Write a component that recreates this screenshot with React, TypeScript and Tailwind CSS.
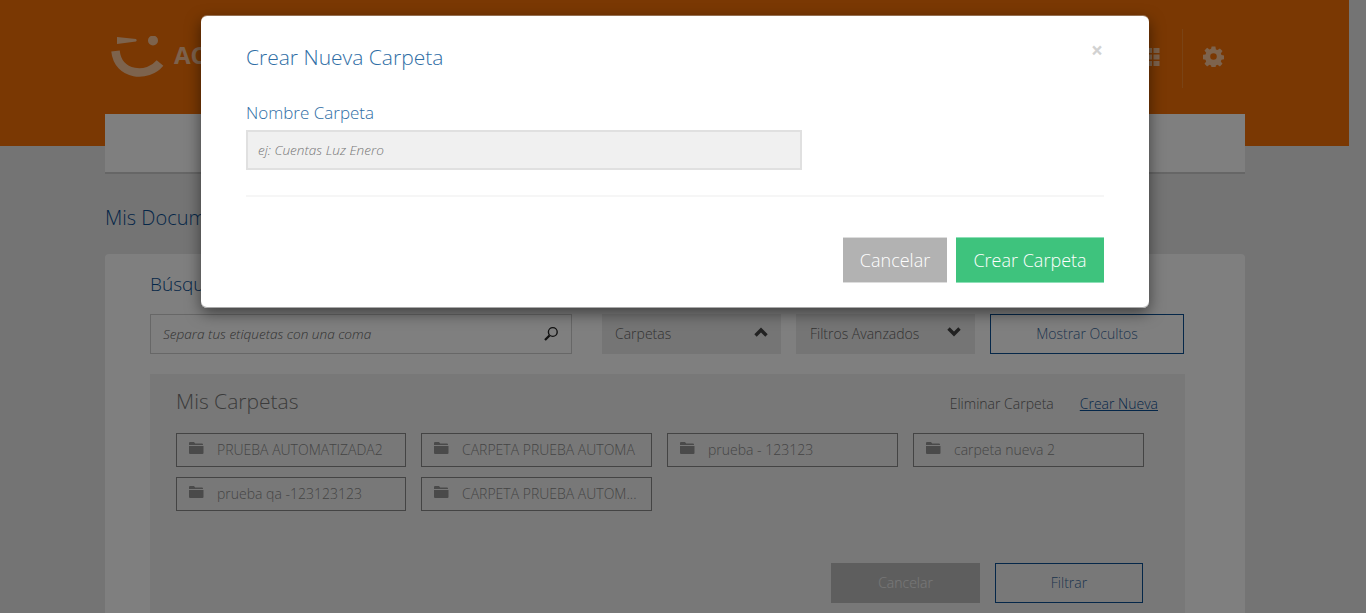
const folders = [
  "PRUEBA AUTOMATIZADA2",
  "CARPETA PRUEBA AUTOMA",
  "prueba - 123123",
  "carpeta nueva 2",
  "prueba qa -123123123",
  "CARPETA PRUEBA AUTOM...",
];

function Logo() {
  return (
    <svg width="54" height="42" viewBox="0 0 54 42" className="shrink-0">
      <path d="M7 1 L26 3 Q27.5 4 26 5.5 L7 8Z" fill="#ffffff" fillOpacity="0.6" />
      <circle cx="43" cy="4.5" r="5" fill="#ffffff" fillOpacity="0.6" />
      <path d="M5.5 15 C8 40 38 42 50 27" fill="none" stroke="#ffffff" strokeOpacity="0.6" strokeWidth="8.5" />
    </svg>
  );
}

function GridIcon() {
  return (
    <svg width="14" height="18" viewBox="0 0 14 18" fill="#ffffff" fillOpacity="0.6" className="mb-[4px]">
      {[0, 6.5, 13].map((y) =>
        [0, 7.5].map((x) => <rect key={`${x}-${y}`} x={x} y={y} width="6" height="5" />)
      )}
    </svg>
  );
}

function GearIcon() {
  return (
    <svg width="21" height="21" viewBox="0 0 21 21" fill="#ffffff" fillOpacity="0.6" className="mb-[4px]">
      <path
        fillRule="evenodd"
        d="M8.6 0.5h3.8l.5 2.9 1.6.7 2.4-1.7 2.6 2.6-1.7 2.4.7 1.6 2.9.5v3.8l-2.9.5-.7 1.6 1.7 2.4-2.6 2.6-2.4-1.7-1.6.7-.5 2.9H8.6l-.5-2.9-1.6-.7-2.4 1.7-2.6-2.6 1.7-2.4-.7-1.6-2.9-.5V8.9l2.9-.5.7-1.6L1.5 4.4l2.6-2.6 2.4 1.7 1.6-.7zM10.5 7.2a3.3 3.3 0 1 0 0 6.6 3.3 3.3 0 0 0 0-6.6z"
      />
    </svg>
  );
}

function FolderIcon() {
  return (
    <svg width="15" height="12" viewBox="0 0 15 12" fill="#949494" className="mr-[13px] mb-[3px] shrink-0">
      <path d="M1 0h4l1.2 1.5H13a1 1 0 0 1 1 1V3H0V1a1 1 0 0 1 1-1z" />
      <path d="M0 4h14.5v7a1 1 0 0 1-1 1H1a1 1 0 0 1-1-1z" />
    </svg>
  );
}

function SearchIcon() {
  return (
    <svg width="16" height="16" viewBox="0 0 16 16" fill="none" stroke="#222222" strokeWidth="1.4">
      <circle cx="9.8" cy="6" r="4.4" />
      <path d="M6.5 9.4 L2 14" strokeWidth="2.2" />
    </svg>
  );
}

function Chevron({ up }: { up?: boolean }) {
  return (
    <svg width="14" height="10" viewBox="0 0 14 10" fill="none" stroke="#444444" strokeWidth="3.4" className="mb-[3px]">
      <path d={up ? "M1.5 8.5 L7 3 L12.5 8.5" : "M1.5 1.5 L7 7 L12.5 1.5"} />
    </svg>
  );
}

export default function App() {
  return (
    <div className="relative h-[613px] w-[1366px] overflow-hidden bg-[#e8e8e8] font-['Open_Sans',sans-serif] font-light">
      <div className="flex h-full">
        <div className="w-[1349px] shrink-0">
          <header className="h-[146px] bg-[#f47107] px-[105px]">
            <div className="flex h-[114px] items-center justify-between">
              <div className="flex items-center gap-[10px] pb-[1px] pl-[5px]">
                <Logo />
                <span className="pb-[4px] text-[24px] leading-none font-bold text-white/60">ACC</span>
              </div>
              <div className="mt-[3px] flex h-[59px] items-center">
                <GridIcon />
                <div className="mr-[20px] ml-[22px] h-[59px] w-px bg-white/15" />
                <span className="mr-[20px]">
                  <GearIcon />
                </span>
              </div>
            </div>
          </header>

          <main className="mx-[105px] w-[1140px]">
            <div className="-mt-[32px] h-[60px] border-b-2 border-[#cccccc] bg-white" />
            <h1 className="mt-[30px] text-[20px] leading-[28px] text-[#0b4f92]">Mis Documentos</h1>
            <section className="mt-[22px] h-[400px] rounded-t-[4px] bg-white px-[45px] pt-[16px]">
              <h2 className="text-[19px] leading-[28px] text-[#0b4f92]">Búsqueda</h2>
              <div className="mt-[16px] flex h-[40px] items-stretch pb-0 text-[14px]">
                <div className="flex w-[422px] items-center justify-between border border-[#cfcfcf] px-[12px] text-[13.6px] text-[#666] italic">
                  <span>Separa tus etiquetas con una coma</span>
                  <SearchIcon />
                </div>
                <div className="ml-[30px] flex w-[179px] items-center justify-between bg-[#ebebeb] px-[13px] pb-[1px] text-[#666]">
                  <span>Carpetas</span>
                  <Chevron up />
                </div>
                <div className="ml-[15px] flex w-[179px] items-center justify-between bg-[#ebebeb] px-[14px] pb-[1px] text-[#666]">
                  <span>Filtros Avanzados</span>
                  <Chevron />
                </div>
                <div className="ml-[15px] flex w-[194px] items-center justify-center border border-[#0b4f92] pb-[1px] text-[#3b6a9c]">
                  Mostrar Ocultos
                </div>
              </div>

              <div className="mt-[20px] h-[240px] w-[1035px] bg-[#f1f1f1] pt-[12px] pr-[27px] pl-[26px]">
                <div className="flex items-center justify-between">
                  <span className="text-[21px] leading-[30px] text-[#777]">Mis Carpetas</span>
                  <div className="flex gap-[26px] pt-[4px] text-[14px] text-[#666]">
                    <span>Eliminar Carpeta</span>
                    <span className="text-[#0b4f92] underline">Crear Nueva</span>
                  </div>
                </div>
                <div className="mt-[17px] grid w-[968px] grid-cols-[230px_231px_231px_231px] gap-x-[15px] gap-y-[10px]">
                  {folders.map((f) => (
                    <div key={f} className="flex h-[34px] min-w-0 items-center border border-[#888] px-[12px] pb-[1px] text-[14px] text-[#8a8a8a]">
                      <FolderIcon />
                      <span className="whitespace-nowrap">{f}</span>
                    </div>
                  ))}
                </div>
                <div className="mt-[52px] flex justify-end pr-[15px] text-[14px]">
                  <div className="flex h-[40px] w-[149px] items-center justify-center bg-[#bcbcbc] pb-[1px] text-white/80">Cancelar</div>
                  <div className="ml-[15px] flex h-[40px] w-[148px] items-center justify-center border border-[#0b4f92] pb-[1px] text-[#3b6a9c]">Filtrar</div>
                </div>
              </div>
            </section>
          </main>
        </div>
      </div>

      <div className="absolute inset-0 bg-black/50" />

      <div className="absolute top-[16px] left-[201px] h-[292px] w-[948px] rounded-[6px] bg-white px-[45px] pt-[26px] shadow-[0_5px_15px_rgba(0,0,0,0.5),0_-1px_0_rgba(255,255,255,0.35),inset_0_-1px_0_#aaaaaa]">
        <button className="absolute top-[22px] right-[46px] text-[21px] leading-[24px] font-bold text-[#d2d2d2]">×</button>
        <h3 className="text-[21px] leading-[30px] text-[#2f6ea5]">Crear Nueva Carpeta</h3>
        <label className="mt-[29px] block text-[17px] leading-[24px] text-[#2f6ea5]">Nombre Carpeta</label>
        <div className="mt-[5px] flex h-[40px] w-[556px] items-center border-2 border-[#e0e0e0] bg-[#f0f0f0] pt-[1px] pl-[10px] text-[13.6px] text-[#777] italic">
          ej: Cuentas Luz Enero
        </div>
        <div className="mt-[25px] h-[2px] bg-[#f6f6f6]" />
        <div className="mt-[40px] flex justify-end text-[18px] font-light text-white">
          <div className="flex h-[46px] w-[104px] items-center justify-center border-y border-[#dddddd] bg-[#b2b2b2]">Cancelar</div>
          <div className="ml-[9px] flex h-[46px] w-[148px] items-center justify-center border-y border-[#8ee0b8] bg-[#3ec37d]">Crear Carpeta</div>
        </div>
      </div>
    </div>
  );
}
